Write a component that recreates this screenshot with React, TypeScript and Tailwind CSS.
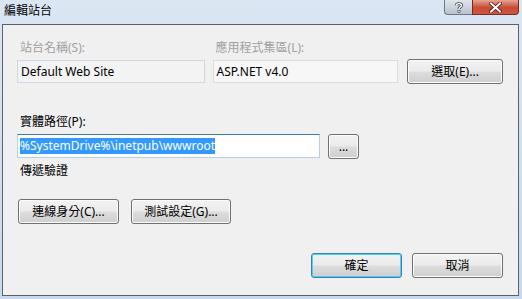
const font = { fontFamily: '"Noto Sans", "Noto Sans CJK TC", sans-serif' };

function WinButton({ label, className = '', primary = false }: { label: string; className?: string; primary?: boolean }) {
  return (
    <button
      className={`flex items-center justify-center rounded-[3px] border text-[12px] text-black ${
        primary ? 'border-[#3c7fb1] shadow-[inset_0_0_0_1px_#48d1ff]' : 'border-[#707070] shadow-[inset_0_0_0_1px_#fcfcfc]'
      } bg-[linear-gradient(to_bottom,#f2f2f2_0%,#ebebeb_48%,#dddddd_52%,#cfcfcf_100%)] ${className}`}
    >
      {label}
    </button>
  );
}

export default function App() {
  return (
    <div
      style={font}
      className="flex h-[299px] w-[522px] flex-col overflow-hidden bg-[linear-gradient(to_bottom,#dbe6f3,#c6d9ee)]"
    >
      {/* title bar */}
      <div className="flex h-[24px] shrink-0 items-start justify-between">
        <span className="pl-[4px] pt-[2px] text-[12px] leading-[18px] text-black">編輯站台</span>
        <div className="mr-[3px] flex h-[15px]">
          <div className="flex w-[28px] items-center justify-center rounded-bl-[4px] border border-r-0 border-t-0 border-[#6d7884] bg-[linear-gradient(to_bottom,#dfe5ec,#b9c3ce)]">
            <svg width="8" height="11" viewBox="0 0 8 11">
              <path d="M1.5 3.2 C1.5 1.2 6.5 1 6.5 3.3 C6.5 5 4 5 4 7" fill="none" stroke="#3a4450" strokeWidth="3" />
              <path d="M1.5 3.2 C1.5 1.2 6.5 1 6.5 3.3 C6.5 5 4 5 4 7" fill="none" stroke="#fff" strokeWidth="1.4" />
              <rect x="2.6" y="8" width="2.8" height="2.6" fill="#3a4450" />
              <rect x="3.3" y="8.6" width="1.4" height="1.4" fill="#fff" />
            </svg>
          </div>
          <div className="flex w-[47px] items-center justify-center rounded-br-[4px] border border-t-0 border-[#7a2a20] bg-[linear-gradient(to_bottom,#e8a493,#c74a36_55%,#d2583e)]">
            <svg width="13" height="11" viewBox="0 0 13 11">
              <path d="M2 1.5 L11 9.5 M11 1.5 L2 9.5" stroke="#4a1a12" strokeWidth="3.6" strokeLinecap="square" />
              <path d="M2 1.5 L11 9.5 M11 1.5 L2 9.5" stroke="#fff" strokeWidth="2" strokeLinecap="square" />
            </svg>
          </div>
        </div>
      </div>

      {/* client area */}
      <div className="ml-[2px] mr-[3px] flex h-[272px] shrink-0 flex-col border border-[#5c636c] bg-[#f0f0f0] pl-[14px] pr-[15px] text-[12px] text-black">
        <div className="mt-[15px] flex items-end">
          <div className="flex w-[188px] flex-col">
            <span className="h-[20px] pl-[3px] leading-[16px] text-[#a0a0a0]">站台名稱(S):</span>
            <div className="flex h-[23px] items-center border border-[#cfd9e4] bg-[#f3f3f3] pl-[3px]">Default Web Site</div>
          </div>
          <div className="ml-[8px] flex w-[186px] flex-col">
            <span className="h-[20px] pl-[3px] leading-[16px] text-[#a0a0a0]">應用程式集區(L):</span>
            <div className="flex h-[23px] items-center border border-[#dcdcdc] bg-[#f7f7f7] pl-[3px]">ASP.NET v4.0</div>
          </div>
          <WinButton label="選取(E)..." className="mb-[-1px] ml-[9px] h-[25px] w-[96px]" />
        </div>

        <span className="mt-[31px] h-[20px] pl-[3px] leading-[16px]">實體路徑(P):</span>
        <div className="flex items-start">
          <div className="flex h-[24px] w-[303px] items-center border border-[#b5cfe7] border-t-[#3d7bad] bg-white pl-[2px]">
            <span className="bg-[#3399ff] leading-[16px] text-white">%SystemDrive%\inetpub\wwwroot</span>
          </div>
          <WinButton label="..." className="ml-[8px] h-[25px] w-[31px] leading-none" />
        </div>
        <span className="mt-[4px] pl-[3px] leading-[16px]">傳遞驗證</span>

        <div className="mt-[20px] flex gap-[12px] pl-[1px]">
          <WinButton label="連線身分(C)..." className="h-[25px] w-[101px]" />
          <WinButton label="測試設定(G)..." className="h-[25px] w-[100px]" />
        </div>

        <div className="mt-[29px] flex justify-end gap-[10px]">
          <WinButton label="確定" primary className="h-[25px] w-[91px]" />
          <WinButton label="取消" className="h-[25px] w-[91px]" />
        </div>
      </div>
    </div>
  );
}
